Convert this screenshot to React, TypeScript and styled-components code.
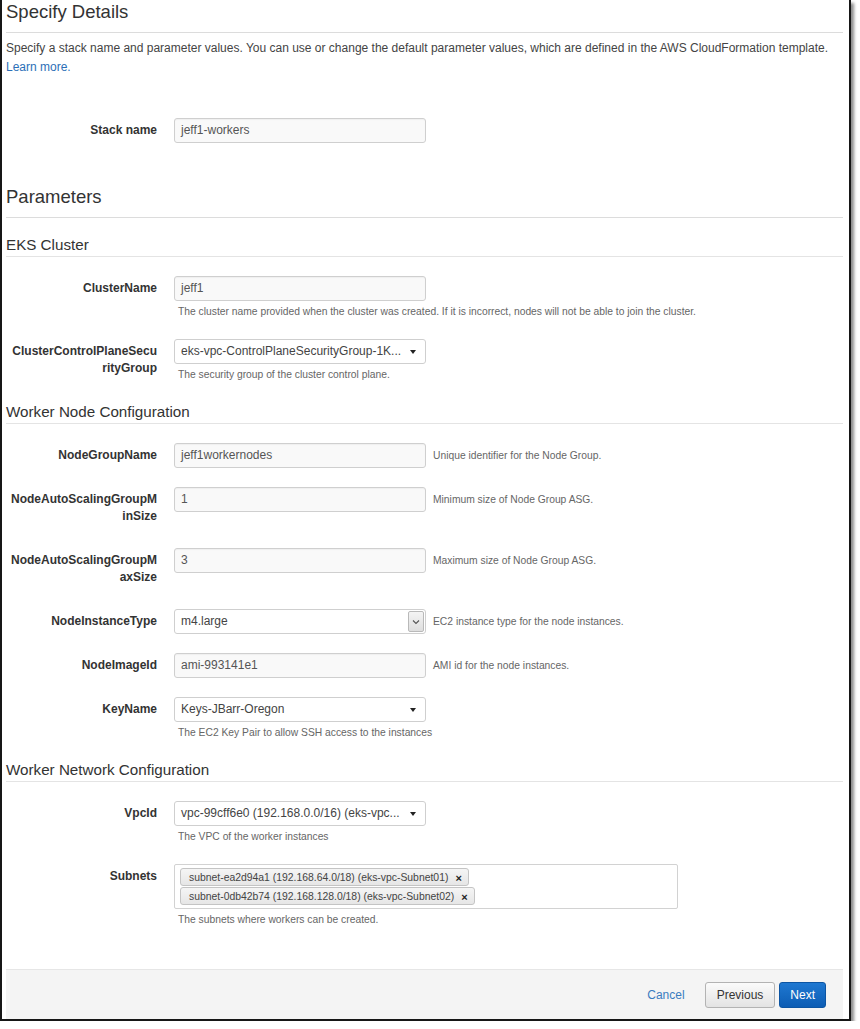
import React from "react";
import styled, { createGlobalStyle } from "styled-components";

const Global = createGlobalStyle`
  html, body { margin: 0; padding: 0; background: #ffffff; }
  body { font-family: "Liberation Sans", Arial, sans-serif; color: #333; }
  * { box-sizing: border-box; }
`;

const Frame = styled.div`
  width: 851px;
  border-left: 2px solid #161616;
  border-right: 2px solid #161616;
  border-bottom: 2px solid #161616;
  box-shadow: 3px 3px 3px rgba(0, 0, 0, 0.45);
  padding: 0 6px 0 4px;
  background: #fff;
`;

const Title = styled.h1`
  margin: 0;
  font-size: 18.5px;
  font-weight: normal;
  line-height: 24px;
  color: #333;
  padding-bottom: 8px;
  border-bottom: 1px solid #dcdcdc;
`;

const Intro = styled.p`
  margin: 6px 0 0 0;
  font-size: 12px;
  line-height: 19px;
  color: #444;
`;

const Link = styled.a`
  color: #2c6fb7;
  text-decoration: none;
`;

const SectionTitle = styled.h2`
  margin: 42px 0 17px 0;
  font-size: 18.5px;
  font-weight: normal;
  line-height: 24px;
  color: #333;
  padding-bottom: 8px;
  border-bottom: 1px solid #dcdcdc;
`;

const GroupTitle = styled.h3`
  margin: 0 0 19px 0;
  font-size: 15.2px;
  font-weight: normal;
  line-height: 20px;
  color: #333;
  padding-bottom: 1px;
  border-bottom: 1px solid #e4e4e4;
`;

const Row = styled.div<{ $top?: number }>`
  display: flex;
  align-items: flex-start;
  margin-top: ${(p) => (p.$top ? `${p.$top}px` : "0")};
  margin-bottom: 19px;
`;

const Label = styled.div`
  width: 151px;
  flex: none;
  margin-right: 17px;
  padding: 4px 0 4px 0;
  text-align: right;
  font-size: 12px;
  font-weight: bold;
  line-height: 17px;
  color: #333;
  white-space: pre-line;
`;

const Field = styled.div<{ $w?: number }>`
  width: ${(p) => p.$w ?? 252}px;
  flex: none;
`;

const TextBox = styled.div`
  height: 25px;
  border: 1px solid #cfcfcf;
  border-radius: 3px;
  background: #f9f9f9;
  box-shadow: inset 0 1px 1px rgba(0, 0, 0, 0.04);
  padding: 0 6px;
  font-size: 12px;
  line-height: 23px;
  color: #555;
`;

const SelectBox = styled.div`
  position: relative;
  height: 25px;
  border: 1px solid #cfcfcf;
  border-radius: 3px;
  background: #fff;
  padding: 0 26px 0 6px;
  font-size: 12px;
  line-height: 23px;
  color: #444;
  white-space: nowrap;
  overflow: hidden;
`;

const Caret = styled.span`
  position: absolute;
  right: 9px;
  top: 10px;
  width: 0;
  height: 0;
  border-left: 3.5px solid transparent;
  border-right: 3.5px solid transparent;
  border-top: 4px solid #222;
`;

const NativeSelect = styled.div`
  display: flex;
  height: 25px;
  border: 1px solid #cfcfcf;
  border-radius: 3px;
  background: #fff;
  font-size: 12px;
  color: #444;
  overflow: hidden;
`;

const NativeValue = styled.div`
  flex: 1;
  padding: 0 6px;
  line-height: 23px;
`;

const NativeArrow = styled.div`
  width: 16px;
  margin: 1px;
  border: 1px solid #b9b9b9;
  border-radius: 2px;
  background: linear-gradient(#f4f4f4, #dedede);
  display: flex;
  align-items: center;
  justify-content: center;
`;

const HelpBelow = styled.div`
  margin-top: 3px;
  padding-left: 4px;
  font-size: 10.3px;
  line-height: 16px;
  color: #666;
  white-space: nowrap;
`;

const HelpSide = styled.div`
  margin-left: 7px;
  font-size: 10.3px;
  line-height: 25px;
  color: #666;
  white-space: nowrap;
`;

const MultiBox = styled.div`
  border: 1px solid #d2d2d2;
  border-radius: 2px;
  background: #fff;
  padding: 3px 5px 3px 5px;
  display: flex;
  flex-direction: column;
  align-items: flex-start;
  gap: 1px;
`;

const Tag = styled.div`
  display: flex;
  align-items: center;
  height: 18px;
  padding: 0 6px 0 8px;
  border: 1px solid #c4c4c4;
  border-radius: 3px;
  background: linear-gradient(#f5f5f5, #e6e6e6);
  font-size: 10.4px;
  color: #444;
  white-space: nowrap;
`;

const TagClose = styled.span`
  margin-left: 7px;
  font-size: 11px;
  font-weight: bold;
  color: #222;
  line-height: 1;
  margin-top: 2px;
`;

const Footer = styled.div`
  margin-top: 41px;
  height: 50px;
  background: #f4f4f4;
  border-top: 1px solid #e6e6e6;
  display: flex;
  align-items: center;
  justify-content: flex-end;
  padding-right: 17px;
`;

const CancelLink = styled.a`
  color: #3a7cc0;
  font-size: 12px;
  text-decoration: none;
  margin-right: 16px;
`;

const Button = styled.button<{ $primary?: boolean }>`
  height: 26px;
  padding: 0 ${(p) => (p.$primary ? 10 : 11)}px;
  border-radius: 3px;
  font-family: "Liberation Sans", Arial, sans-serif;
  font-size: 12px;
  cursor: pointer;
  border: 1px solid ${(p) => (p.$primary ? "#0c55a3" : "#b3b3b3")};
  background: ${(p) =>
    p.$primary
      ? "linear-gradient(#1f78d1, #0d5db4)"
      : "linear-gradient(#fbfbfb, #e3e3e3)"};
  color: ${(p) => (p.$primary ? "#fff" : "#333")};
  margin-left: 4px;
`;

function Chevron() {
  return (
    <svg width="8" height="6" viewBox="0 0 8 6">
      <path d="M1 1.5 L4 4.5 L7 1.5" fill="none" stroke="#555" strokeWidth="1.1" />
    </svg>
  );
}

export default function App() {
  return (
    <>
      <Global />
      <Frame>
        <Title>Specify Details</Title>
        <Intro>
          Specify a stack name and parameter values. You can use or change the default parameter values, which are
          defined in the AWS CloudFormation template.
          <br />
          <Link href="#">Learn more.</Link>
        </Intro>

        <Row $top={41}>
          <Label>Stack name</Label>
          <Field>
            <TextBox>jeff1-workers</TextBox>
          </Field>
        </Row>

        <SectionTitle>Parameters</SectionTitle>

        <GroupTitle>EKS Cluster</GroupTitle>
        <Row>
          <Label>ClusterName</Label>
          <Field>
            <TextBox>jeff1</TextBox>
            <HelpBelow>
              The cluster name provided when the cluster was created. If it is incorrect, nodes will not be able to join
              the cluster.
            </HelpBelow>
          </Field>
        </Row>
        <Row>
          <Label>{"ClusterControlPlaneSecu\nrityGroup"}</Label>
          <Field>
            <SelectBox>
              eks-vpc-ControlPlaneSecurityGroup-1K...
              <Caret />
            </SelectBox>
            <HelpBelow>The security group of the cluster control plane.</HelpBelow>
          </Field>
        </Row>

        <GroupTitle>Worker Node Configuration</GroupTitle>
        <Row>
          <Label>NodeGroupName</Label>
          <Field>
            <TextBox>jeff1workernodes</TextBox>
          </Field>
          <HelpSide>Unique identifier for the Node Group.</HelpSide>
        </Row>
        <Row>
          <Label>{"NodeAutoScalingGroupM\ninSize"}</Label>
          <Field>
            <TextBox>1</TextBox>
          </Field>
          <HelpSide>Minimum size of Node Group ASG.</HelpSide>
        </Row>
        <Row>
          <Label>{"NodeAutoScalingGroupM\naxSize"}</Label>
          <Field>
            <TextBox>3</TextBox>
          </Field>
          <HelpSide>Maximum size of Node Group ASG.</HelpSide>
        </Row>
        <Row>
          <Label>NodeInstanceType</Label>
          <Field>
            <NativeSelect>
              <NativeValue>m4.large</NativeValue>
              <NativeArrow>
                <Chevron />
              </NativeArrow>
            </NativeSelect>
          </Field>
          <HelpSide>EC2 instance type for the node instances.</HelpSide>
        </Row>
        <Row>
          <Label>NodeImageId</Label>
          <Field>
            <TextBox>ami-993141e1</TextBox>
          </Field>
          <HelpSide>AMI id for the node instances.</HelpSide>
        </Row>
        <Row>
          <Label>KeyName</Label>
          <Field>
            <SelectBox>
              Keys-JBarr-Oregon
              <Caret />
            </SelectBox>
            <HelpBelow>The EC2 Key Pair to allow SSH access to the instances</HelpBelow>
          </Field>
        </Row>

        <GroupTitle>Worker Network Configuration</GroupTitle>
        <Row>
          <Label>VpcId</Label>
          <Field>
            <SelectBox>
              vpc-99cff6e0 (192.168.0.0/16) (eks-vpc...
              <Caret />
            </SelectBox>
            <HelpBelow>The VPC of the worker instances</HelpBelow>
          </Field>
        </Row>
        <Row>
          <Label>Subnets</Label>
          <Field $w={504}>
            <MultiBox>
              <Tag>
                subnet-ea2d94a1 (192.168.64.0/18) (eks-vpc-Subnet01)
                <TagClose>×</TagClose>
              </Tag>
              <Tag>
                subnet-0db42b74 (192.168.128.0/18) (eks-vpc-Subnet02)
                <TagClose>×</TagClose>
              </Tag>
            </MultiBox>
            <HelpBelow>The subnets where workers can be created.</HelpBelow>
          </Field>
        </Row>

        <Footer>
          <CancelLink href="#">Cancel</CancelLink>
          <Button>Previous</Button>
          <Button $primary>Next</Button>
        </Footer>
      </Frame>
    </>
  );
}
